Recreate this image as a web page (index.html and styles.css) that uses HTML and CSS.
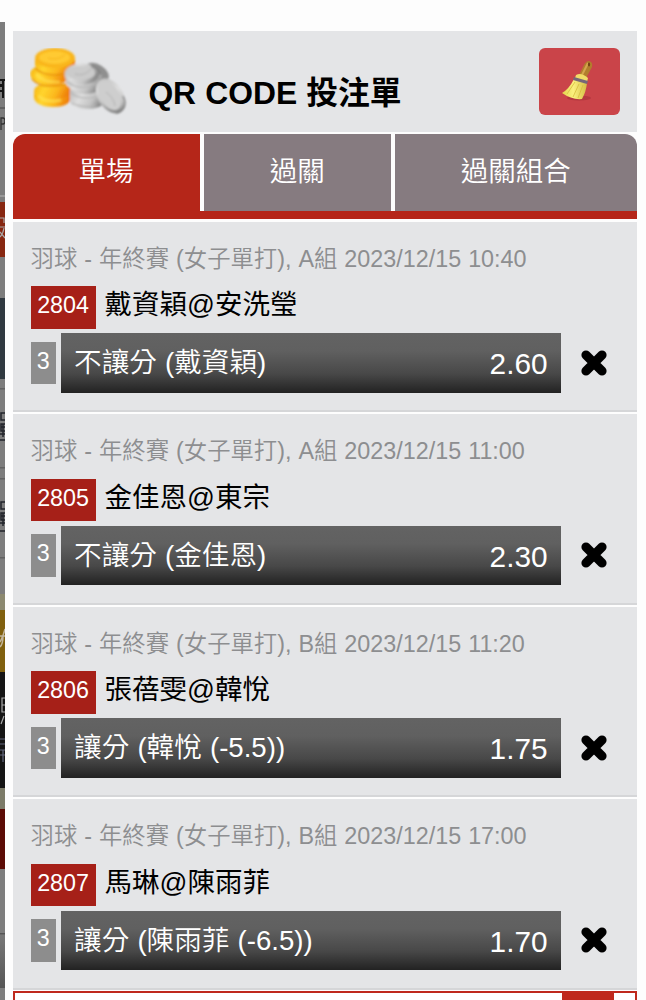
FILE: index.html
```html
<!DOCTYPE html>
<html lang="zh-Hant">
<head>
<meta charset="utf-8">
<title>QR CODE 投注單</title>
<link rel="stylesheet" href="styles.css">
</head>
<body>
<div class="screen">
  <aside class="backdrop" aria-hidden="true">
    <svg class="backdrop-art" width="5" height="978" viewBox="0 22 5 978">
      <defs><linearGradient id="foot" x1="0" y1="0" x2="0" y2="1"><stop offset="0" stop-color="#777"/><stop offset="1" stop-color="#555"/></linearGradient></defs>
      <path fill="#7d7d7d" d="M0 22h5v978H0z"/>
      <path fill="#151515" d="M0 79h5v2H0zM0 84h3v3H0zM2 80h2v18H2zM0 90h4v2H0z"/>
      <path fill="#626262" d="M0 107h5v2H0z"/>
      <path fill="none" stroke="#333" stroke-width="1.3" d="M1 130v-12h2q2 0 2 3t-2 3H1"/>
      <path fill="#999" d="M0 195h5v2H0z"/>
      <path fill="#872711" d="M0 202h5v55H0z"/>
      <path fill="none" stroke="#aaa" stroke-width="1.2" d="M0 218h4v5M0 227h5M4 228q-1 6-4 9M0 232l5 6"/>
      <path fill="#303940" d="M0 298h5v81H0z"/>
      <path fill="#626262" d="M0 388h5v1.500H0zM0 467h5v1.500H0zM0 478h5v1.500H0zM0 557h5v1.500H0z"/>
      <path fill="none" stroke="#22252b" stroke-width="1.500" d="M5 413H1v7h4M5 424H1v7h4M1 427h4M0 434h5M3 424v13M0 440h5M5 502H1v7h4M5 513H1v7h4M1 516h4M0 523h5M3 513v13M0 531h5"/>
      <path fill="#8c8970" d="M0 594h5v16H0z"/>
      <path fill="#80600e" d="M0 610h5v62H0z"/>
      <path fill="none" stroke="#c2b59b" stroke-width="1.500" d="M5 629q-2 8-5 13M0 636h5M3 636q0 8-3 11"/>
      <path fill="#151515" d="M0 672h5v116H0z"/>
      <path fill="none" stroke="#aaa" stroke-width="1.200" d="M5 698H2v14h3M2 705h3M4 716l-3 8"/>
      <path fill="none" stroke="#62677c" stroke-width="1.200" d="M0 739h5M0 744h5M0 750h5M0 755h5M3 750v12"/>
      <path fill="#7c7b68" d="M0 788h5v21H0z"/>
      <path fill="#5b0b05" d="M0 809h5v60H0z"/>
      <path fill="#555" d="M0 933h5v1.500H0z"/>
      <path fill="url(#foot)" d="M0 935h5v53H0z"/>
    </svg>
  </aside>
  <main class="slip">
    <header class="slip-header">
      <svg class="coins" width="98" height="70" viewBox="0 0 98 70">
        <defs>
          <linearGradient id="gold" x1="0" x2="1" y2=".25"><stop offset="0" stop-color="#f5ad0d"/><stop offset=".35" stop-color="#ffd52e"/><stop offset=".7" stop-color="#fcb81d"/><stop offset="1" stop-color="#ef8009"/></linearGradient>
          <linearGradient id="silver" x1="0" x2="1" y2=".35"><stop offset="0" stop-color="#b9b9b9"/><stop offset=".4" stop-color="#dedede"/><stop offset=".75" stop-color="#c4c4c4"/><stop offset="1" stop-color="#8c8c8c"/></linearGradient>
          <filter id="soft" x="-10%" y="-10%" width="120%" height="120%"><feGaussianBlur stdDeviation=".8"/></filter>
        </defs>
        <g filter="url(#soft)">
          <g fill="url(#gold)">
            <path d="M4 43v7c1 6 9 9 19 9s17-3 18-9v-7z"/>
            <ellipse cx="22.500" cy="43" rx="18.500" ry="9"/>
            <path d="M.5 24v4c2 7 11 9 20 9s18-3 19-9v-4z"/>
            <ellipse cx="20.500" cy="25" rx="20" ry="9"/>
            <path d="M5 11v6c1 7 10 9 20 9 11 0 19-3 20-9v-7z"/>
          </g>
          <ellipse cx="25" cy="10" rx="20" ry="10" fill="#f9b61c"/>
          <ellipse cx="24.500" cy="9.500" rx="15.500" ry="6.500" fill="#ffca30"/>
          <path d="M5 20q7 7 20 7 14-1 19-6M2 31q7 8 20 7 13 0 18-5" fill="none" stroke="#e38705" stroke-width="1.500" opacity=".8"/>
          <path d="M6 26q7 9 24 8M8 48q8 7 23 4" fill="none" stroke="#ffe75a" stroke-width="3" opacity=".55"/>
          <path d="M18 10q8 3 17-3" fill="none" stroke="#f2a81a" opacity=".7"/>
          <ellipse cx="67" cy="24.500" rx="13" ry="8" fill="#8f8f8f" transform="rotate(32 67 24.500)"/>
          <g fill="url(#silver)">
            <path d="M40 42v12c1 4 8 7 17 7s17-3 18-8V40z"/>
            <path d="M35 27q1 18 20 19 14 0 17-9V27z"/>
            <ellipse cx="52" cy="26" rx="17.500" ry="10.500"/>
            <ellipse cx="80.500" cy="48" rx="19" ry="12.500" transform="rotate(58 80.500 48)"/>
          </g>
          <ellipse cx="51" cy="25" rx="14" ry="7" fill="#cbcbcb"/>
          <ellipse cx="79.500" cy="47.500" rx="16" ry="9.500" fill="#cecece" transform="rotate(58 79.500 47.500)"/>
          <path d="M38 34q10 9 29 2M41 45q8 7 24 4M42 55q9 5 24 3" fill="none" stroke="#b5b5b5" stroke-width="1.200"/>
          <path d="M45 26q9 3 16-5M76 44q8 6 9 14" fill="none" stroke="#b2b2b2"/>
          <path d="M61 18q7 2 9 7M93 48q4 8 0 13-3 4-7 4" fill="none" stroke="#7d7d7d" stroke-width="1.400"/>
        </g>
      </svg>
      <h1 class="slip-title">QR CODE 投注單</h1>
      <button class="clear" aria-label="清除">
        <svg width="32" height="42" viewBox="0 0 32 42">
          <defs><linearGradient id="straw" x1="0" x2="1"><stop offset="0" stop-color="#e3d34b"/><stop offset=".45" stop-color="#fbf07e"/><stop offset="1" stop-color="#d5bd45"/></linearGradient></defs>
          <ellipse cx="18" cy="38" rx="12" ry="2.500" fill="#9d2935" opacity=".5"/>
          <path d="M18 15l5-10q2-4 5-4 4 1 3 6l-6 11z" fill="#b27e2d"/>
          <path d="M21 15l6-12" stroke="#d5a54d" stroke-width="2"/>
          <ellipse cx="28" cy="4.500" rx="1.100" ry="2" fill="#754314"/>
          <path d="M15 15q5-3 12 3l-1 4-12-4z" fill="#f1dc68"/>
          <path d="M13 19l13 4q-1 9-5 16-10 1-20-6 7-4 12-14z" fill="url(#straw)"/>
          <path d="M13 17l14 4-1 3-14-4z" fill="#766778"/>
          <path d="M14 22L6 34M18 24l-6 13M22 25l-5 13" stroke="#d6bb3d" stroke-width=".8"/>
        </svg>
      </button>
    </header>
    <nav class="tabs">
      <a class="tab tab-single tab-active">單場</a>
      <a class="tab tab-parlay">過關</a>
      <a class="tab tab-combo">過關組合</a>
    </nav>
    <section class="bets">
      <article class="bet">
        <p class="event">羽球 - 年終賽 (女子單打), A組 2023/12/15 10:40</p>
        <div class="match"><span class="code">2804</span><span class="teams">戴資穎@安洗瑩</span></div>
        <div class="pick"><span class="count">3</span><div class="selection"><span class="choice">不讓分 (戴資穎)</span><span class="odds">2.60</span></div><svg class="remove" viewBox="0 0 26 26"><path d="M5 5l16 16M21 5L5 21"/></svg></div>
      </article>
      <article class="bet">
        <p class="event">羽球 - 年終賽 (女子單打), A組 2023/12/15 11:00</p>
        <div class="match"><span class="code">2805</span><span class="teams">金佳恩@東宗</span></div>
        <div class="pick"><span class="count">3</span><div class="selection"><span class="choice">不讓分 (金佳恩)</span><span class="odds">2.30</span></div><svg class="remove" viewBox="0 0 26 26"><path d="M5 5l16 16M21 5L5 21"/></svg></div>
      </article>
      <article class="bet">
        <p class="event">羽球 - 年終賽 (女子單打), B組 2023/12/15 11:20</p>
        <div class="match"><span class="code">2806</span><span class="teams">張蓓雯@韓悅</span></div>
        <div class="pick"><span class="count">3</span><div class="selection"><span class="choice">讓分 (韓悅 (-5.5))</span><span class="odds">1.75</span></div><svg class="remove" viewBox="0 0 26 26"><path d="M5 5l16 16M21 5L5 21"/></svg></div>
      </article>
      <article class="bet">
        <p class="event">羽球 - 年終賽 (女子單打), B組 2023/12/15 17:00</p>
        <div class="match"><span class="code">2807</span><span class="teams">馬琳@陳雨菲</span></div>
        <div class="pick"><span class="count">3</span><div class="selection"><span class="choice">讓分 (陳雨菲 (-6.5))</span><span class="odds">1.70</span></div><svg class="remove" viewBox="0 0 26 26"><path d="M5 5l16 16M21 5L5 21"/></svg></div>
      </article>
    </section>
    <footer class="stake"><div class="stake-mark"></div></footer>
  </main>
</div>
</body>
</html>
```
FILE: styles.css
```css
* { box-sizing: border-box; }
body {
  margin: 0;
  background: #fdfdfd;
  font-family: "Liberation Sans", "Noto Sans CJK TC", sans-serif;
}
.screen {
  display: flex;
  width: 646px;
  height: 1000px;
  overflow: hidden;
}
.backdrop { flex: 0 0 5px; padding-top: 22px; }
.backdrop-art { display: block; }
.slip {
  flex: none;
  width: 624px;
  margin-left: 8.4px;
  padding-top: 30.5px;
}
.slip-header {
  display: flex;
  align-items: flex-start;
  height: 101.5px;
  background: #e4e5e7;
}
.coins { flex: none; margin: 17px 0 0 16.5px; }
.slip-title {
  flex: 1;
  margin: 42px 0 0 20.5px;
  font-size: 31.8px;
  font-weight: 700;
  line-height: 40px;
  white-space: nowrap;
  word-spacing: 0.3px;
  color: #000;
}
.clear {
  display: flex;
  align-items: center;
  justify-content: center;
  width: 81px;
  height: 67px;
  margin: 17px 17px 0 0;
  padding: 0 5px 0 0;
  border: 0;
  border-radius: 6px;
  background: #ca4449;
}
.tabs {
  display: flex;
  gap: 4px;
  height: 85px;
  margin-top: 2px;
  border-bottom: 8px solid #b52619;
}
.tab {
  height: 77px;
  background: #867b80;
  color: #fff;
  font-size: 27.5px;
  font-weight: 350;
  line-height: 76px;
  text-align: center;
}
.tab-single { width: 187px; padding-right: 2px; border-top-left-radius: 12px; }
.tab-parlay { width: 186.5px; padding-right: 1px; }
.tab-combo { width: 242.5px; padding-right: 1px; border-top-right-radius: 12px; }
.tab-active { background: #b52619; }
.bets { display: grid; gap: 2px; margin-top: 2.5px; }
.bet {
  height: 190.5px;
  padding: 23px 29px 0 17.2px;
  border-bottom: 2px solid #d5d6d8;
  background: #e4e5e7;
  font-weight: 350;
}
.event {
  margin: 0;
  font-size: 23.35px;
  line-height: 28px;
  white-space: nowrap;
  word-spacing: 0.5px;
  color: #8d8e90;
}
.match { display: flex; height: 43px; margin-top: 13.5px; }
.code {
  width: 65px;
  height: 42.5px;
  background: #a62018;
  color: #fff;
  font-size: 23.3px;
  line-height: 39px;
  text-align: center;
}
.teams {
  margin-left: 9px;
  font-size: 27.5px;
  font-weight: 400;
  line-height: 38px;
  color: #000;
}
.pick { display: flex; align-items: center; height: 59.5px; margin-top: 4px; }
.count {
  width: 25.5px;
  height: 42.5px;
  background: #8d8d8d;
  color: #fff;
  font-size: 23.3px;
  line-height: 38px;
  text-align: center;
}
.selection {
  display: flex;
  justify-content: space-between;
  width: 500px;
  height: 59.5px;
  margin-left: 4.5px;
  padding: 0 13px 0 13.5px;
  background: linear-gradient(#636363 0%, #606060 30%, #484848 68%, #222 100%);
  color: #fff;
}
.choice { font-size: 27.6px; line-height: 60px; white-space: nowrap; word-spacing: 0.5px; }
.odds { font-size: 29.8px; line-height: 61px; }
.remove {
  width: 26px;
  height: 26px;
  margin-left: 20.6px;
  fill: none;
  stroke: #000;
  stroke-width: 9.2;
  stroke-linecap: round;
}
.stake {
  height: 30px;
  margin-top: 1px;
  padding-left: 547px;
  border: 2px solid #bf291d;
  background: #fff;
}
.stake-mark { width: 52px; height: 28px; background: #bf291d; }
```
